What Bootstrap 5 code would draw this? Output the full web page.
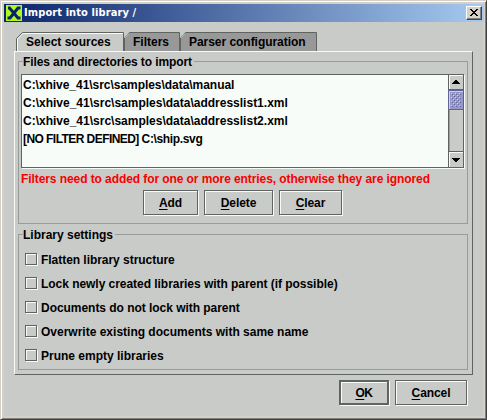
<!DOCTYPE html>
<html lang="en">
<head>
<meta charset="utf-8">
<meta name="viewport" content="width=device-width, initial-scale=1">
<title>Import into library /</title>
<link href="https://cdn.jsdelivr.net/npm/bootstrap@5.3.0/dist/css/bootstrap.min.css" rel="stylesheet">
<style>
:root { --face:#c8cbc8; --dark:#606460; --mid:#989b98; --lite:#f8fcf8; }
body { font:bold 12px/14px "Liberation Sans",Arial,sans-serif; color:#000; background:var(--face); overflow:hidden; }
.win { width:487px; height:420px; background:var(--face); border:1px solid #d4d0c8; border-right-color:#404040; border-bottom-color:#404040;
  box-shadow:inset 1px 1px 0 #fff, inset -1px -1px 0 #808080, inset 3px 3px 0 #d4d0c8, inset -3px -3px 0 #d4d0c8; padding:3px 2px 3px 3px; }
.titlebar { height:18px; padding:0 2px; background:linear-gradient(90deg,#0a246a,#a6caf0); color:#fff; font:bold 11px/18px "DejaVu Sans Condensed","DejaVu Sans",sans-serif; }
.app-icon { width:16px; height:16px; margin-top:1px; }
.caption { margin-left:2px; white-space:pre; letter-spacing:.1px; }
.btn-x { width:16px; height:14px; background:#d4d0c8; border:1px solid; border-color:#fff #404040 #404040 #fff; box-shadow:inset -1px -1px 0 #808080; }
.tabs { margin:10px 0 0 12px; height:19px; }
.tab-item { position:relative; height:19px; padding:3px 0 0 10px; white-space:nowrap; }
.tab-item + .tab-item { padding-left:9px; }
.tab-item svg { position:absolute; left:0; top:0; }
.tab-item span { position:relative; }
.pane { margin-left:10px; width:459px; height:324px; border:1px solid; border-color:var(--lite) var(--dark) var(--dark) var(--lite); padding:3px 3px 0; }
.group { width:450px; border:1px solid var(--mid); }
.group .cap { display:block; width:max-content; background:var(--face); padding:0 2px 0 0; margin:-7px 0 0 4px; white-space:nowrap; }
.g-files .cap { letter-spacing:-.1px; }
.g-files { height:163px; margin-top:6px; }
.g-lib { height:136px; margin-top:10px; }
.listbox { width:443px; height:94px; margin:5px 0 0 2px; border:1px solid var(--dark); box-shadow:1px 1px 0 var(--lite); background:var(--lite); }
.entries { padding:1px 0 0 1px; line-height:18px; white-space:nowrap; }
.entries li { height:18px; }
.tight { letter-spacing:-.04px; }
.tighter { letter-spacing:-.35px; }
.tightest { letter-spacing:-.56px; }
.warn { color:#f80000; margin:4px 0 0 2px; white-space:nowrap; letter-spacing:-.08px; }
.etched { --bs-btn-border-radius:0; height:25px; padding:1px 0 0; border:1px solid var(--dark); border-radius:0; background:var(--face); color:#000; font:inherit; line-height:22px; letter-spacing:-.1px;
  box-shadow:inset 1px 1px 0 var(--lite), 1px 1px 0 var(--lite); white-space:nowrap; }
.etched:hover { background:var(--face); color:#000; border-color:var(--dark); }
.etched u { text-underline-offset:2px; text-decoration-thickness:1px; text-decoration-skip-ink:none; }
.etched.is-default { border-width:2px; line-height:20px; letter-spacing:-.5px; }
.check { height:14px; margin-bottom:10px; white-space:nowrap; }
.tick { width:12px; height:12px; border:1px solid var(--dark); box-shadow:inset 1px 1px 0 var(--lite), 1px 1px 0 var(--lite); margin-right:4px; }
</style>
</head>
<body>
<main class="win d-flex flex-column">
  <header class="titlebar d-flex flex-shrink-0">
    <svg class="app-icon" viewBox="0 0 16 16"><path fill="#b0f820" d="M0 0h16v16H0z"/><path fill="none" stroke="#0a246a" stroke-width="3" d="M2 3h1.500L12 13h2.500M14.500 3H12L4 13H1.500"/></svg>
    <span class="caption">Import into library /</span>
    <div class="btn-x ms-auto mt-auto mb-auto"><svg class="d-block" width="13" height="11" viewBox="0 0 13 11" shape-rendering="crispEdges"><path d="M3 2h2v1h1v1h2V3h1V2h2v1h-1v1H9v1H8v1h1v1h1v1h1v1H9V8H8V7H6v1H5v1H3V8h1V7h1V6h1V5H5V4H4V3H3z"/></svg></div>
  </header>
  <nav class="tabs d-flex flex-shrink-0">
    <div class="tab-item" style="width:108px"><svg width="108" height="19"><path d="M.5 19V6.500L6.500.5H107.500V19" fill="none" stroke="#606460"/><path d="M1.500 19V7L7 1.500H107" fill="none" stroke="#f8fcf8"/></svg><span>Select sources</span></div>
    <div class="tab-item" style="width:56px"><svg width="56" height="19"><path d="M.5 19V5.500L5.500.5H55.500V19" fill="#989898" stroke="#606460"/><path d="M.5 6L5 1.500" stroke="#c8cbc8"/></svg><span>Filters</span></div>
    <div class="tab-item ps-2" style="width:137px"><svg width="137" height="19"><path d="M.5 19V5.500L5.500.5H136.500V19" fill="#989898" stroke="#606460"/><path d="M.5 6L5 1.500" stroke="#c8cbc8"/></svg><span style="margin-left:1px" class="tight">Parser configuration</span></div>
  </nav>
  <section class="pane flex-shrink-0">
    <div class="group g-files">
      <span class="cap">Files and directories to import</span>
      <div class="listbox d-flex">
        <ul class="entries list-unstyled flex-grow-1 mb-0">
          <li class="tight">C:\xhive_41\src\samples\data\manual</li>
          <li>C:\xhive_41\src\samples\data\addresslist1.xml</li>
          <li>C:\xhive_41\src\samples\data\addresslist2.xml</li>
          <li><span class="tightest">[NO FILTER DEFINED] </span><span class="tighter">C:\ship.svg</span></li>
        </ul>
        <svg width="15" height="92" shape-rendering="crispEdges">
          <defs><pattern id="bumps" x="3" y="18" width="4" height="4" patternUnits="userSpaceOnUse"><path fill="#c8ccf8" d="M0 0h1v1H0zM2 2h1v1H2z"/><path fill="#606498" d="M1 1h1v1H1zM3 3h1v1H3z"/></pattern></defs>
          <path fill="#c8cbc8" d="M0 0h15v92H0z"/><path fill="#606460" d="M0 0h1v92H0zM1 14h14v1H1zM1 76h14v1H1z"/><path fill="#989b98" d="M1 34h1v42H1z"/>
          <path fill="#f8fcf8" d="M1 0h14v1H1zM1 0h1v14H1zM1 77h14v1H1zM1 77h1v15H1z"/>
          <path d="M7 5h2v1h1v1h1v1h1v1H4V8h1V7h1V6h1zM4 83h8v1h-1v1h-1v1H9v1H7v-1H6v-1H5v-1H4z"/>
          <path fill="#606498" d="M0 15h15v20H0z"/><path fill="#c8ccf8" d="M1 16h14v18H1z"/><path fill="#9898c8" d="M2 17h13v17H2z"/><path fill="url(#bumps)" d="M3 18h10v14H3z"/>
        </svg>
      </div>
      <div class="warn">Filters need to added for one or more entries, otherwise they are ignored</div>
      <div class="d-flex" style="margin:4px 0 0 124px;gap:6px">
        <button class="btn etched" style="width:55px"><u>A</u>dd</button>
        <button class="btn etched" style="width:69px"><u>D</u>elete</button>
        <button class="btn etched" style="width:63px"><u>C</u>lear</button>
      </div>
    </div>
    <div class="group g-lib">
      <span class="cap">Library settings</span>
      <div style="padding:11px 0 0 6px">
        <div class="check d-flex"><span class="tick"></span><span class="tight">Flatten library structure</span></div>
        <div class="check d-flex"><span class="tick"></span><span class="tight">Lock newly created libraries with parent (if possible)</span></div>
        <div class="check d-flex"><span class="tick"></span><span class="tight">Documents do not lock with parent</span></div>
        <div class="check d-flex"><span class="tick"></span><span>Overwrite existing documents with same name</span></div>
        <div class="check d-flex"><span class="tick"></span><span>Prune empty libraries</span></div>
      </div>
    </div>
  </section>
  <footer class="d-flex justify-content-end" style="padding:5px 17px 0 0;gap:6px">
    <button class="btn etched is-default" style="width:50px"><u>O</u>K</button>
    <button class="btn etched" style="width:72px"><u>C</u>ancel</button>
  </footer>
</main>
<script src="https://cdn.jsdelivr.net/npm/bootstrap@5.3.0/dist/js/bootstrap.bundle.min.js"></script>
</body>
</html>
